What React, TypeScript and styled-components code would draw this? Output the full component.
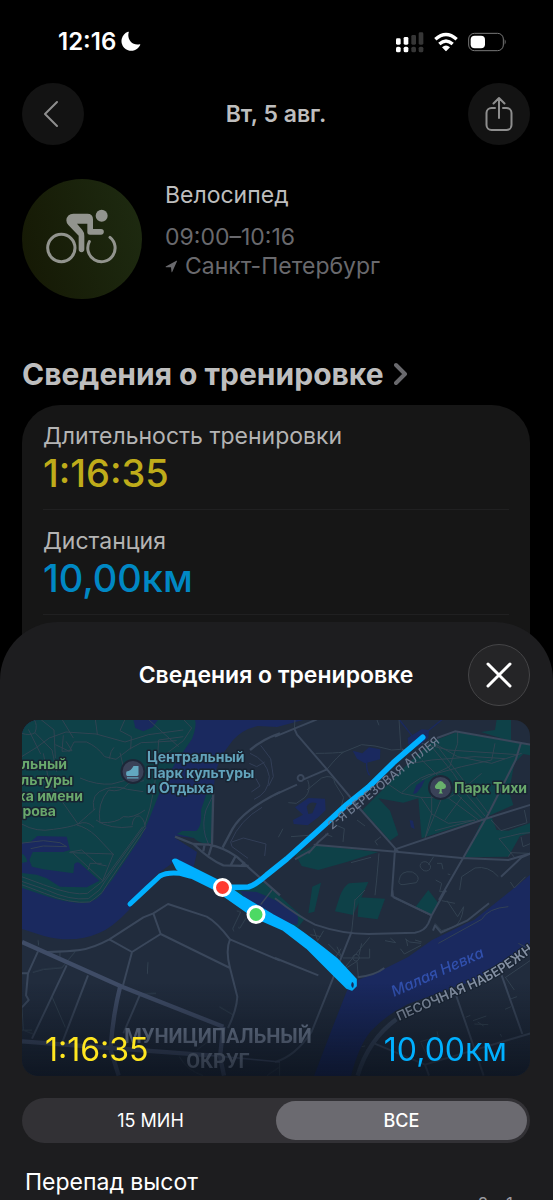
import React, { useState } from "react";
import styled, { createGlobalStyle } from "styled-components";

const GlobalStyle = createGlobalStyle`
  *, *::before, *::after { box-sizing: border-box; }
  body { margin: 0; background: #000; }
  button { font: inherit; color: inherit; border: 0; padding: 0; background: none; cursor: pointer; }
  h1, h2, h3, p, dl, dt, dd { margin: 0; }
`;

const Screen = styled.div`
  height: 100vh;
  overflow: hidden;
  background: #000;
  color: #fff;
  font-family: Inter, "Liberation Sans", sans-serif;
  display: flex;
  flex-direction: column;
`;

const StatusBar = styled.div`
  flex: none;
  display: flex;
  align-items: center;
  justify-content: space-between;
  height: 83px;
  padding: 0 46px 0 58px;
`;

const Clock = styled.div`
  display: flex;
  align-items: center;
  gap: 5px;
  font-size: 24px;
  font-weight: 600;
`;

const StatusIcons = styled.div`
  display: flex;
  align-items: center;
  gap: 10px;
`;

const NavBar = styled.header`
  display: flex;
  align-items: center;
  justify-content: space-between;
  padding: 0 23px 0 22px;
`;

const NavTitle = styled.h1`
  font-size: 23px;
  line-height: 28px;
  font-weight: 600;
  color: #bebebe;
`;

const RoundButton = styled.button<{ $raised?: boolean }>`
  display: grid;
  place-items: center;
  width: 62px;
  height: 62px;
  border-radius: 50%;
  background: ${(p) => (p.$raised ? "#252527" : "#131313")};
  border: ${(p) => (p.$raised ? "1px solid #454547" : "0")};
`;

const Workout = styled.section`
  display: flex;
  align-items: center;
  gap: 23px;
  padding: 34px 22px 0;
`;

const WorkoutBadge = styled.div`
  width: 120px;
  height: 120px;
  border-radius: 50%;
  background: linear-gradient(75deg, #151804, #1e2b11);
`;

const WorkoutText = styled.div`
  display: flex;
  flex-direction: column;
  padding-bottom: 16px;
`;

const WorkoutName = styled.h2`
  font-size: 23px;
  line-height: 28px;
  font-weight: 400;
  color: #bebebe;
  margin-bottom: 14px;
`;

const WorkoutMeta = styled.p`
  display: flex;
  align-items: center;
  gap: 7px;
  font-size: 23px;
  line-height: 29px;
  color: #69696d;
`;

const SectionLink = styled.a`
  display: flex;
  align-items: center;
  gap: 10px;
  margin-top: 56px;
  padding: 0 22px;
  font-size: 30px;
  line-height: 38px;
  font-weight: 700;
  color: #bebebe;
  text-decoration: none;
`;

const SummaryCard = styled.dl`
  margin: 12px 23px 0 22px;
  padding: 0 21px 46px;
  border-radius: 38px 38px 0 0;
  background: #161616;
`;

const SummaryRow = styled.div`
  height: 105px;
  padding-top: 17px;
  border-bottom: 1px solid #202021;
`;

const SummaryLabel = styled.dt`
  font-size: 23px;
  line-height: 28px;
  color: #b4b4b4;
`;

const SummaryValue = styled.dd<{ $color: string }>`
  font-size: 38px;
  line-height: 46px;
  font-weight: 500;
  color: ${(p) => p.$color};
`;

const Sheet = styled.section`
  flex: 1 0 auto;
  margin-top: -39px;
  padding: 22px 23px 0 22px;
  border-radius: 58px 58px 0 0;
  background: #1d1d1f;
`;

const SheetHeader = styled.header`
  display: grid;
  grid-template-columns: 62px 1fr 62px;
  align-items: center;
  text-align: center;
`;

const SheetTitle = styled.h2`
  grid-column: 2;
  font-size: 23px;
  line-height: 28px;
  font-weight: 600;
`;

const MapCard = styled.figure`
  display: grid;
  margin: 14px 0 0;
  border-radius: 16px;
  overflow: hidden;
`;

const MapDrawing = styled.svg`
  grid-area: 1 / 1;
  display: block;
  width: 100%;
  height: auto;
`;

const MapStats = styled.figcaption`
  grid-area: 1 / 1;
  display: flex;
  align-items: flex-end;
  justify-content: space-between;
  padding: 0 23px 7px;
  background: linear-gradient(transparent 74%, rgba(8, 14, 24, 0.7));
`;

const MapStat = styled.span<{ $color: string }>`
  font-size: 32px;
  line-height: 38px;
  color: ${(p) => p.$color};
`;

const Segments = styled.div`
  display: grid;
  grid-template-columns: 1fr 1fr;
  height: 45px;
  margin-top: 22px;
  padding: 3px;
  border-radius: 23px;
  background: #323135;
`;

const Segment = styled.button<{ $active: boolean }>`
  border-radius: 20px;
  font-size: 18px;
  font-weight: ${(p) => (p.$active ? 500 : 400)};
  background: ${(p) => (p.$active ? "#6b6a70" : "transparent")};
`;

const ElevationTitle = styled.h3`
  margin-top: 25px;
  padding-left: 3px;
  font-size: 23px;
  line-height: 28px;
  font-weight: 400;
`;

const ElevationScale = styled.p`
  display: flex;
  justify-content: flex-end;
  gap: 18px;
  padding-right: 17px;
  font-size: 17px;
  line-height: 16px;
  color: #98989d;
`;

const Moon = () => (
  <svg width="20" height="21" viewBox="0 0 20 21" aria-hidden="true">
    <path fill="#fff" d="M7 .8A.5 .5 0 0 1 7.700 1.500C5.800 8 11 15 18.700 13.300A.5 .5 0 0 1 19.200 14.100A9.800 9.800 0 1 1 7 .8Z" />
  </svg>
);

const Signal = () => (
  <svg width="28" height="22" viewBox="0 0 84 66" aria-hidden="true">
    <g fill="#fff">
      <rect x="0" y="22" width="14" height="19" rx="4" />
      <rect x="23" y="18" width="14" height="23" rx="4" />
      <rect x="0" y="47" width="14" height="17" rx="5" />
      <rect x="23" y="47" width="14" height="17" rx="5" />
    </g>
    <g fill="#363636">
      <rect x="46" y="12" width="14" height="29" rx="4" />
      <rect x="68" y="4" width="14" height="37" rx="4" />
      <rect x="46" y="47" width="14" height="17" rx="5" />
      <rect x="68" y="47" width="14" height="17" rx="5" />
    </g>
  </svg>
);

const Wifi = () => (
  <svg width="24" height="20" viewBox="0 0 72 60" aria-hidden="true">
    <g fill="none" stroke="#fff" strokeWidth="10">
      <path d="M4 22Q36 -7 68 22" />
      <path d="M16 36Q36 18 56 36" />
    </g>
    <path fill="#fff" d="M24 46Q36 35 48 46L37 57Q36 58 35 57Z" />
  </svg>
);

const Battery = () => (
  <svg width="39" height="20" viewBox="0 0 117 60" aria-hidden="true">
    <rect x="2" y="4" width="104" height="52" rx="17" fill="none" stroke="#777" strokeWidth="3" />
    <rect x="8" y="11" width="43" height="38" rx="12" fill="#fff" />
    <path d="M110 22Q116 30 110 38Z" fill="#777" />
  </svg>
);

const Cyclist = () => (
  <svg width="120" height="120" viewBox="66 57 360 360" aria-hidden="true">
    <g fill="none" stroke="#92948e" strokeWidth="9" strokeLinecap="round">
      <circle cx="184" cy="264" r="41" />
      <path d="M330 232A41 41 0 1 1 268 245" />
    </g>
    <circle cx="305" cy="167" r="18" fill="#92948e" />
    <path
      fill="#92948e"
      d="M220 161H262Q279 161 279 178V207H303A8 8 0 0 1 303 224H270Q262 224 262 216V191H231L247 210Q253 217 253 228V268A8 8 0 0 1 236 268V227L205 195Q199 189 199 181Q201 161 220 161Z"
    />
  </svg>
);

const LocationArrow = () => (
  <svg width="13" height="13" viewBox="0 0 13 13" aria-hidden="true">
    <path fill="#69696d" d="M.8 6.600L11.400 .8Q12.300 .4 12 1.300L7.200 12Q6.700 12.700 6.500 11.800L6 7.300L1 7.300Q.2 7.200 .8 6.600Z" />
  </svg>
);

/* Map geometry is kept in five sheets, each drawn at three units to the pixel. */
const SHEETS = {
  nw: "translate(10 710) scale(.33333)",
  ne: "translate(275 710) scale(.33333)",
  sw: "translate(10 890) scale(.33333)",
  se: "translate(275 890) scale(.33333)",
  mid: "translate(160 840) scale(.33333)",
};

const RouteMap = () => (
  <MapDrawing viewBox="22 720 508 356" role="img" aria-label="Маршрут тренировки">
    <rect x="22" y="720" width="508" height="356" fill="#212c3d" />

    <g fill="#1a295f">
      <path d="M22 720H303L277 727L258 726Q243 729 233 740L222 755L216 770L213 792L211 840L176 836L175 838L197 852L193 870L174 862L160 872Q145 884 129 910Q112 928 99 933Q74 944 44 936L22 929Z" />
      <path d="M530 875L503 897L474 920Q466 923 461 926L432 940L408 957L382 970L358 980Q349 984 346 993L330 1034L314 1076H351Q359 1045 371 1031Q386 1015 408 1004L475 980L508 960L530 944Z" />
    </g>

    <g fill="#0e4148">
      <path d="M22 720H195Q197 726 192 739L176 762L163 784L148 822L141 837L112 880L104 890Q98 902 84 903Q66 903 46 896L22 888Z" />
      <path d="M208 789L213 790L211 843Q200 845 194 838L177 834L182 831H196Q202 827 201 810Z" />
      <g transform={SHEETS.ne}>
        <path d="M470 95L545 66L735 100L768 104V136L745 132L718 160L702 245L715 285L625 325L440 385L430 265L385 278L310 265L345 302L370 375L345 392L262 300L340 222L400 160Z" />
        <path d="M618 66L660 60L665 28H708V94Z" />
        <path d="M622 328L650 322L665 360L700 362L768 338V368L735 378L700 440L570 442Z" />
        <path d="M60 432L120 405L310 426L215 456L130 480L80 468Z" />
        <path d="M112 530L138 518L118 605L100 610Z" />
        <path d="M194 560Q205 530 222 520L280 516L258 565L234 615L180 604Z" />
        <path d="M252 562L330 566L308 628L248 620Z" />
        <path d="M460 540L492 582L468 616L422 590Z" />
      </g>
      <path transform={SHEETS.mid} d="M225 150L300 128L320 128L350 160L434 236L410 268L360 250L250 185Z" />
    </g>

    <g fill="#1a295f">
      <path transform={SHEETS.mid} d="M240 152L290 156Q350 180 400 210Q420 225 412 255L385 250Q300 215 258 180Z" />
      <g transform={SHEETS.nw}>
        <path d="M370 28H445L428 52L400 64L376 54Z" />
        <path d="M30 400L62 395L82 378L170 380L180 420L160 426L68 426L58 450L66 470L100 478L190 490L193 462Q202 452 212 462L268 512L230 532L150 530L110 505L80 494L30 488V460L52 455Q46 430 30 430Z" />
      </g>
      <g transform={SHEETS.ne}>
        <path d="M233 122L262 130L282 112L316 118L315 148L270 160L246 146Z" />
        <path d="M60 292L100 264L150 266L152 300L130 322L98 346L56 342L54 330L84 314Z" />
        <path d="M414 252L424 226L450 208L440 230L424 250Z" />
        <path d="M404 330L414 332L419 357L408 352Z" />
        <path d="M398 84L440 58L462 60L460 84L430 110L400 104Z" />
      </g>
    </g>
    <path transform={SHEETS.ne} d="M95 290Q105 272 125 280L112 310L100 312Z" fill="#212c3d" />
    <g fill="none" stroke="#1a295f" strokeWidth="4">
      <path transform={SHEETS.ne} d="M276 150Q272 180 284 196M372 28L420 88M502 28L455 66" />
    </g>

    {/* footpaths */}
    <g fill="none" stroke="#364554" strokeWidth="3" opacity=".9">
      <g transform={SHEETS.nw}>
        <path d="M35 70Q60 78 75 68Q84 45 72 28M55 58L92 132M75 68L126 120L140 185M92 28L132 60L136 144M35 140L80 112L118 84L168 66L258 72L345 96L415 74L520 60M136 104L178 124L192 96L230 96Q262 110 284 140L318 148L360 116L394 98L440 96L500 92M256 28L262 72M345 28L330 62L364 80L362 118M156 28L190 84M160 76L156 124L186 122L168 94M298 146Q302 120 312 112" />
        <path d="M100 130L118 220L204 342M35 342Q80 368 130 358Q180 352 204 342Q240 310 256 296M62 205L118 220M210 204Q260 226 306 222L350 210M330 128L345 190M404 346Q440 250 446 90L520 80M200 345Q230 352 258 378L312 435M204 342Q230 330 252 352M252 300Q240 250 288 236Q320 226 352 238L400 245M270 340Q260 280 296 240Q330 250 356 220L402 212M270 338Q320 340 340 320Q370 326 405 300M258 330Q300 360 368 350M366 346Q370 316 388 318Q402 326 406 350M178 428L310 432L278 512L190 430" />
        <path d="M35 514L110 540Q180 572 235 566L268 540L286 512L404 348M35 524L104 550Q180 582 240 576L276 548L296 516L408 352M35 500L100 524Q190 558 232 550L280 512L398 350M30 400L100 392L150 398L170 410L100 408L62 416M180 426L215 420L262 462L290 468M234 480L240 460L275 460" />
        <path d="M415 28L450 60L506 110M520 28L545 54L520 92L468 132" />
      </g>
      <g transform={SHEETS.nw} stroke="#35415a">
        <path d="M720 130Q770 150 778 200Q776 250 732 268M752 106L782 146L790 200L776 228M718 160L740 170L764 156M738 206L750 228L724 246M756 292Q690 330 662 396L666 410L714 445M666 396L700 384L768 402L764 438M596 404L586 378Q576 340 588 300L606 262" />
      </g>
      <g transform={SHEETS.ne}>
        <path d="M122 130Q180 130 206 126L260 104L300 108L350 120L378 118M372 28L378 118M312 46L306 30M60 28L58 60M156 178Q190 136 206 126M98 210Q110 240 90 262L64 280L40 278M96 240L140 204Q176 190 180 220L206 262L196 300L124 360L100 376L48 380M10 382L24 356M180 344L208 356L204 396M246 330L270 348M318 380L300 394L308 406M150 372L172 380" />
        <path d="M440 150L622 326M478 96L640 310M462 100L535 190L580 260L630 318M460 90L548 140L650 160L740 130M548 66V100L524 170L440 210M410 160L470 150L600 140L690 146M330 216L380 250L438 262L520 264L610 330M380 248Q440 190 486 190L560 170M438 262L470 310L450 385M470 240V312L520 340L600 330M500 264L452 380M560 262L510 330M620 190L560 240L520 264M440 100L520 120L730 134M600 330L480 362M660 100L650 150L560 170" />
        <path d="M648 330L678 362L756 338L748 300M672 386L706 378L740 370L768 368M672 386L720 444M738 380L744 410L768 400M700 440L708 428L760 430M440 476A14 12 0 1 0 462 462A14 12 0 1 0 440 476M476 440L460 464M486 460H500L504 478M518 492L526 494M372 512Q376 480 412 486Q440 500 424 518L384 524Q370 524 372 512M554 540L560 500L600 474Q640 466 670 500M706 516L718 534L752 500M482 510L500 520L494 545L516 545" />
        <path d="M228 458L288 442M300 556L305 510L312 430M490 700L620 628Q640 594 700 590M500 572L540 580M516 572L548 620L566 590Q560 640 536 650L500 662L480 640M730 700L768 720" />
      </g>
      <g transform={SHEETS.se}>
        <path d="M240 30L270 0M240 28L230 125M210 232L284 142M160 162L200 202L186 170M180 204L198 176M236 196A9 9 0 1 0 250 210A9 9 0 1 0 236 196M204 204H284V176M252 196L260 160M204 240L246 214L250 262M330 152L362 158L346 144M390 146L404 156L438 160M376 176L388 192L438 166M394 148L398 168M420 150L440 156M116 116L128 152L146 122M106 134L138 140" />
        <path d="M572 382L586 376M594 392L634 378M598 402L640 404M608 396L626 408M690 358L708 350M704 328L726 320M676 432L680 440M436 455L490 440L486 424M438 458L462 510L560 500M690 260L718 300M692 262L768 210M14 557V520M260 470L270 468" />
      </g>
      <g transform={SHEETS.sw}>
        <path d="M68 247L100 238L156 233L196 184M150 182V204M84 150L86 166M126 320L166 412M414 216L412 252M390 312L438 310M36 350L40 420L70 432M628 350L672 376M36 420H66M508 500Q530 540 580 557M560 480L600 450M770 557L810 530M680 62L692 66L668 116L672 124M708 84L690 114L684 112" />
      </g>
    </g>

    {/* streets */}
    <g fill="none" stroke="#3a475b" strokeWidth="6" strokeLinejoin="round">
      <g transform={SHEETS.nw}>
        <path d="M610 240L606 404M810 70Q760 86 720 120M810 246Q700 300 668 356L638 412M495 380L550 402L596 404Q640 412 680 440L724 480L810 556M550 402Q600 450 640 466L716 468M584 402L580 424M606 404L596 436M676 440L662 466M704 456L694 468" strokeWidth="7" />
      </g>
      <g transform={SHEETS.ne}>
        <path d="M0 80L58 56L126 28M58 56L66 74L156 178L258 300L372 428M0 254L66 224M86 208L156 178M68 204A9 9 0 1 0 86 204A9 9 0 1 0 68 204M380 118L396 124M486 84L540 64L600 74L768 104M738 98L722 150L640 312L492 570M768 284L620 330L360 418L350 560M116 404L372 426L560 444L700 450L768 430M100 430L130 396L160 370M60 448L110 420M768 430L740 442L678 500M352 540L354 560L470 616" />
      </g>
      <g transform={SHEETS.se}>
        <path d="M0 25Q70 80 120 104Q200 132 280 132L420 128Q448 124 460 100L470 76L512 0M356 22L470 76M230 125L110 425Q60 500 0 516M474 122L480 106L498 128L576 92L642 40M0 204L130 256M248 262Q300 256 328 234" />
        <path d="M544 318L626 557M680 256L742 432M292 458L450 524L768 430M450 524L462 557" />
      </g>
      <g transform={SHEETS.sw}>
        <path d="M112 186Q180 184 210 180Q250 174 298 148L400 82L430 70L474 42L590 80Q620 96 660 148L810 212M430 70L452 132L660 234M298 148L366 186L452 132M366 186L338 290M660 148Q646 180 660 234L682 320Q680 360 654 414M84 184L54 250H36M54 250L48 316L56 330L36 352M170 226L66 446M234 256L158 454M390 314L340 430" />
      </g>
      <path transform={SHEETS.mid} d="M336 150L302 194" strokeWidth="4" />
    </g>

    {/* main roads */}
    <g fill="none" stroke="#3f4c66" strokeWidth="13">
      <g transform={SHEETS.sw}>
        <path d="M36 156L336 290L640 410" />
        <path d="M330 292Q310 370 302 470M36 454L300 474L600 496" />
        <path d="M302 480L326 557M640 410L630 500L642 557" />
        <path d="M600 496L810 516" strokeWidth="5" />
      </g>
      <path transform={SHEETS.se} d="M364 388Q280 450 248 557" stroke="#354359" />
    </g>

    {/* ridden track */}
    <g transform={SHEETS.mid} fill="none" stroke="#00b0ff" strokeLinecap="round" strokeLinejoin="round">
      <path d="M-90 192L-40 145L0 108Q20 96 60 100L90 108" strokeWidth="15" />
      <path d="M215 142L265 141Q285 136 320 105L380 57L480 -33L560 -106L625 -158L700 -232L788 -308" strokeWidth="17" />
      <path fill="#00b0ff" strokeWidth="5" d="M38 62Q42 54 56 62L188 128L250 172L340 226L400 258Q450 292 530 356L588 418L588 438L576 450L560 444L520 404L440 324L370 270L280 230L160 146L90 112L60 96L50 86Z" />
    </g>
    <path d="M352 982Q355 983 353 988Q350 986 352 982Z" fill="#17295b" />
    <g stroke="#fff" strokeWidth="3">
      <circle cx="222.500" cy="887.500" r="8" fill="#ff3b30" />
      <circle cx="256" cy="914.500" r="8" fill="#4cd964" />
    </g>

    {/* places */}
    <g stroke="#1d2738" strokeWidth="2" fill="#3a4258">
      <circle cx="133" cy="771.500" r="11.500" />
      <circle cx="440.500" cy="787.500" r="11.500" />
    </g>
    <path fill="#62a8c0" d="M126.500 771.500Q131 771 133.500 766H138.500V773Q139 776 137 776H127Q125.500 775 126.500 771.500ZM127 777.300H138.500V778.600H127Z" />
    <path fill="#69b06c" d="M439.700 789H437Q434.500 788.500 435 786Q436 784 437 783.500Q438 781 440.500 781Q443 781 444 783.500Q446 784 446 786.500Q446 788.500 443.500 789H441.700V792L443 793.500H438.500L439.700 792Z" />

    <g
      fontFamily="Inter, 'Liberation Sans', sans-serif"
      fontWeight="700"
      fontSize="14"
      paintOrder="stroke"
      stroke="#182331"
      strokeWidth="3"
      strokeLinejoin="round"
    >
      <g fill="#69a86c" textAnchor="end">
        <text x="67" y="769">льный</text>
        <text x="73" y="785">льтуры</text>
        <text x="83" y="801">ха имени</text>
        <text x="56" y="816">рова</text>
      </g>
      <g fill="#62a3bb">
        <text x="147" y="762">Центральный</text>
        <text x="147" y="778">Парк культуры</text>
        <text x="147" y="793">и Отдыха</text>
      </g>
      <text x="454" y="793" fill="#69a86c">Парк Тихи</text>
    </g>

    <g fontFamily="Inter, 'Liberation Sans', sans-serif">
      <text transform="translate(332 830) rotate(-39)" fontSize="12" fontWeight="500" fill="#6d7a90">
        2-Я БЕРЕЗОВАЯ АЛЛЕЯ
      </text>
      <text transform="translate(394 997) rotate(-24)" fontSize="15" fontStyle="italic" fontWeight="500" fill="#3150ad">
        Малая Невка
      </text>
      <path id="embankment" d="M399 1021L435 1005L465 992Q490 982 513 966L560 932" fill="none" />
      <text fontSize="13" fontWeight="600" fill="#8490a3" paintOrder="stroke" stroke="#182331" strokeWidth="2">
        <textPath href="#embankment">ПЕСОЧНАЯ НАБЕРЕЖНАЯ</textPath>
      </text>
    </g>
    <g
      fontFamily="Roboto, 'Liberation Sans', sans-serif"
      fontWeight="700"
      fontSize="20"
      fill="#75839a"
      textAnchor="middle"
    >
      <text x="218" y="1043">МУНИЦИПАЛЬНЫЙ</text>
      <text x="218" y="1068">ОКРУГ</text>
    </g>
  </MapDrawing>
);

const RANGES = ["15 МИН", "ВСЕ"];

export default function App() {
  const [range, setRange] = useState("ВСЕ");

  return (
    <Screen>
      <GlobalStyle />
      <StatusBar>
        <Clock>
          12:16
          <Moon />
        </Clock>
        <StatusIcons>
          <Signal />
          <Wifi />
          <Battery />
        </StatusIcons>
      </StatusBar>

      <NavBar>
        <RoundButton aria-label="Назад">
          <svg width="20" height="28" viewBox="0 0 20 28" fill="none" stroke="#8e8e8e" strokeWidth="2" strokeLinecap="round" strokeLinejoin="round">
            <path d="M14 2L2 14L14 26" />
          </svg>
        </RoundButton>
        <NavTitle>Вт, 5 авг.</NavTitle>
        <RoundButton aria-label="Поделиться">
          <svg width="28" height="36" viewBox="0 0 28 36" fill="none" stroke="#8e8e8e" strokeWidth="2" strokeLinecap="round" strokeLinejoin="round">
            <path d="M10 12H6.500A5 5 0 0 0 1.500 17V29A5 5 0 0 0 6.500 34H21.500A5 5 0 0 0 26.500 29V17A5 5 0 0 0 21.500 12H18M14 22V2M8.500 7.500L14 2L19.500 7.500" />
          </svg>
        </RoundButton>
      </NavBar>

      <Workout>
        <WorkoutBadge>
          <Cyclist />
        </WorkoutBadge>
        <WorkoutText>
          <WorkoutName>Велосипед</WorkoutName>
          <WorkoutMeta>09:00–10:16</WorkoutMeta>
          <WorkoutMeta>
            <LocationArrow />
            Санкт-Петербург
          </WorkoutMeta>
        </WorkoutText>
      </Workout>

      <SectionLink href="#details">
        Сведения о тренировке
        <svg width="14" height="24" viewBox="0 0 14 24" fill="none" stroke="#69696d" strokeWidth="4" strokeLinecap="round" strokeLinejoin="round" aria-hidden="true">
          <path d="M2 3L11 12L2 21" />
        </svg>
      </SectionLink>

      <SummaryCard>
        <SummaryRow>
          <SummaryLabel>Длительность тренировки</SummaryLabel>
          <SummaryValue $color="#bfac1a">1:16:35</SummaryValue>
        </SummaryRow>
        <SummaryRow>
          <SummaryLabel>Дистанция</SummaryLabel>
          <SummaryValue $color="#0088c4">10,00км</SummaryValue>
        </SummaryRow>
      </SummaryCard>

      <Sheet id="details">
        <SheetHeader>
          <SheetTitle>Сведения о тренировке</SheetTitle>
          <RoundButton $raised aria-label="Закрыть">
            <svg width="26" height="26" viewBox="0 0 26 26" fill="none" stroke="#fff" strokeWidth="3" strokeLinecap="round">
              <path d="M2 2L24 24M24 2L2 24" />
            </svg>
          </RoundButton>
        </SheetHeader>

        <MapCard>
          <RouteMap />
          <MapStats>
            <MapStat $color="#ffe620">1:16:35</MapStat>
            <MapStat $color="#00b0ff">10,00км</MapStat>
          </MapStats>
        </MapCard>

        <Segments role="group" aria-label="Период">
          {RANGES.map((name) => (
            <Segment key={name} $active={range === name} aria-pressed={range === name} onClick={() => setRange(name)}>
              {name}
            </Segment>
          ))}
        </Segments>

        <ElevationTitle>Перепад высот</ElevationTitle>
        <ElevationScale>
          <span>2</span>
          <span>1</span>
        </ElevationScale>
      </Sheet>
    </Screen>
  );
}
